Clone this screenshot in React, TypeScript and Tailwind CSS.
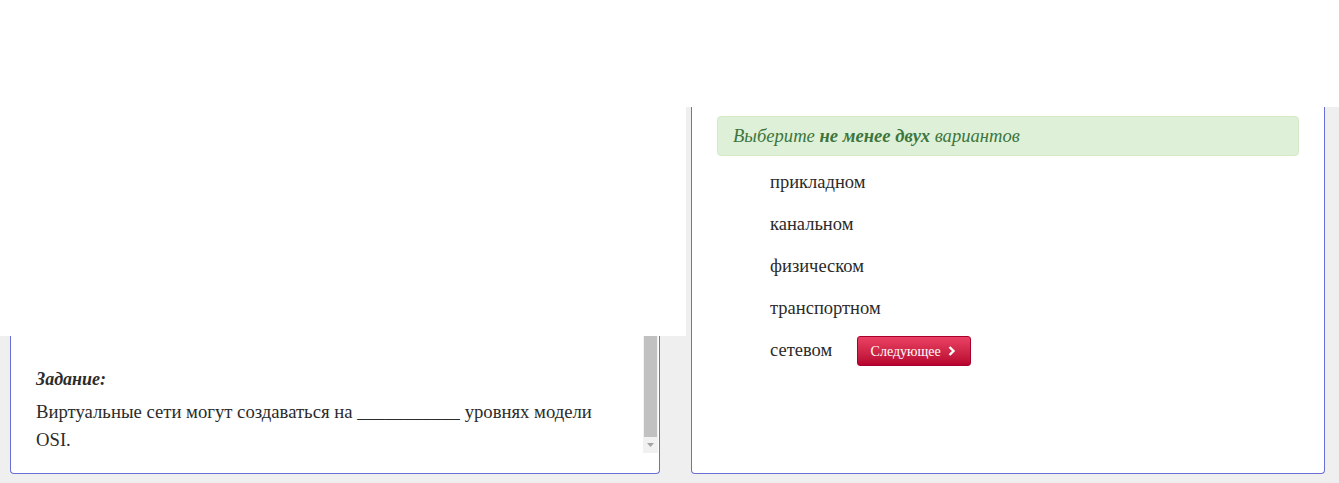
import React from "react";

export default function App() {
  return (
    <div className="w-[1339px] h-[483px] bg-[#efefef] overflow-hidden flex flex-col font-['Liberation_Serif','Times_New_Roman',serif]">
      <div className="h-[107px] bg-white shrink-0" />
      <div className="flex flex-1 items-start">
        {/* Left column */}
        <div className="w-[686px] shrink-0 flex flex-col">
          <div className="h-[229px] bg-white" />
          <div className="ml-[10px] w-[650px] h-[138px] bg-white border border-t-0 border-[#6a6fd2] rounded-b-[4px] flex flex-col">
            <div className="h-[117px] flex">
              <div className="flex-1 pl-[25px] pr-[20px] pt-[31px]">
                <div className="text-[18px] leading-[24px] font-bold italic text-[#2b2b2b]">Задание:</div>
                <div className="mt-[7px] text-[18.7px] leading-[28px] text-[#2b2b2b] w-[580px]">
                  Виртуальные сети могут создаваться на ___________ уровнях модели OSI.
                </div>
              </div>
              <div className="w-[15px] mr-[1px] bg-[#f1f1f1] flex flex-col">
                <div className="h-[101px] mx-[1px] bg-[#c1c1c1]" />
                <div className="flex-1 flex items-center justify-center">
                  <svg width="7" height="4" viewBox="0 0 7 4">
                    <path d="M0 0h7L3.5 4z" fill="#a3a3a3" />
                  </svg>
                </div>
              </div>
            </div>
          </div>
        </div>
        {/* Right column */}
        <div className="ml-[5px] w-[634px] h-[367px] bg-white border border-t-0 border-[#6a6fd2] rounded-b-[4px] px-[25px] pt-[9px]">
          <div className="h-[40px] bg-[#dff0d8] border border-[#d6e9c6] rounded-[4px] flex items-center pl-[15px] text-[18.6px] italic text-[#3c763d]">
            <span>
              Выберите <b>не менее двух</b> вариантов
            </span>
          </div>
          <div className="mt-[6px] pl-[53px] text-[18.5px] text-[#2b2b2b]">
            <div className="h-[42px] flex items-center">прикладном</div>
            <div className="h-[42px] flex items-center">канальном</div>
            <div className="h-[42px] flex items-center">физическом</div>
            <div className="h-[42px] flex items-center">транспортном</div>
            <div className="h-[42px] flex items-center">
              <span>сетевом</span>
              <button className="ml-[25px] h-[30px] w-[114px] rounded-[3px] border border-[#a8002c] bg-gradient-to-b from-[#ea4064] to-[#b8002f] text-white text-[14px] flex items-center justify-center gap-[7px] pr-[2px]">
                <span>Следующее</span>
                <svg width="8" height="10" viewBox="0 0 8 10">
                  <path d="M1.5 1l4 4-4 4" stroke="#fff" strokeWidth="2.4" fill="none" />
                </svg>
              </button>
            </div>
          </div>
        </div>
      </div>
    </div>
  );
}
